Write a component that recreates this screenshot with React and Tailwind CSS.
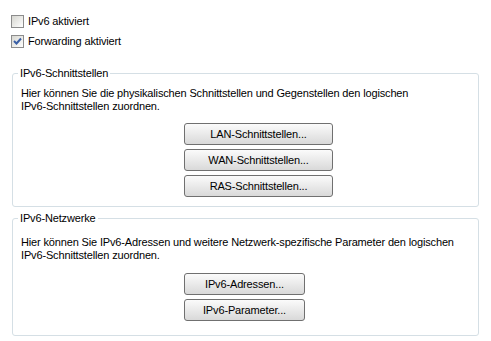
import { useState } from 'react';

function Check({ checked, label, onToggle }) {
    return (
        <label className="flex items-center h-[13px] cursor-default" onClick={onToggle}>
            <span className="w-[13px] h-[13px] border border-[#8c8c8c] bg-gradient-to-br from-[#d6d6d0] to-white flex items-center justify-center">
                {checked && (
                    <svg width="9" height="9" viewBox="0 0 9 9">
                        <path d="M1 4 L3.5 6.5 L8 1.5" fill="none" stroke="#3a5fa5" strokeWidth="2" />
                    </svg>
                )}
            </span>
            <span className="ml-[4px]">{label}</span>
        </label>
    );
}

function Btn({ children, w }) {
    return (
        <button className={`${w} h-[22px] rounded-[3px] border border-[#707070] bg-gradient-to-b from-[#fbfbfb] to-[#d9d9d9] text-black leading-[13px]`}>
            {children}
        </button>
    );
}

function Group({ title, children, className }) {
    return (
        <div className={`relative mx-[12px] border border-[#d5dfe5] rounded-[3px] ${className}`}>
            <span className="absolute -top-[7px] left-[5px] bg-white px-[2px] leading-[13px]">{title}</span>
            {children}
        </div>
    );
}

export default function App() {
    const [ipv6, setIpv6] = useState(false);
    const [fwd, setFwd] = useState(true);

    return (
        <div className="w-[491px] h-[341px] bg-white text-black text-[11px] leading-[13px] tracking-[-0.15px] font-['Liberation_Sans',Arial,sans-serif] pt-[15px] overflow-hidden">
            <div className="flex flex-col gap-[7px] pl-[11px]">
                <Check checked={ipv6} label="IPv6 aktiviert" onToggle={() => setIpv6(!ipv6)} />
                <Check checked={fwd} label="Forwarding aktiviert" onToggle={() => setFwd(!fwd)} />
            </div>

            <Group title="IPv6-Schnittstellen" className="mt-[25px] pt-[13px] pb-[9px]">
                <p className="pl-[8px]">
                    Hier können Sie die physikalischen Schnittstellen und Gegenstellen den logischen
                    <br />
                    IPv6-Schnittstellen zuordnen.
                </p>
                <div className="flex flex-col gap-[4px] pl-[171px] mt-[10px]">
                    <Btn w="w-[149px]">LAN-Schnittstellen...</Btn>
                    <Btn w="w-[149px]">WAN-Schnittstellen...</Btn>
                    <Btn w="w-[149px]">RAS-Schnittstellen...</Btn>
                </div>
            </Group>

            <Group title="IPv6-Netzwerke" className="mt-[11px] pt-[17px] pb-[14px]">
                <p className="pl-[8px]">
                    Hier können Sie IPv6-Adressen und weitere Netzwerk-spezifische Parameter den logischen
                    <br />
                    IPv6-Schnittstellen zuordnen.
                </p>
                <div className="flex flex-col gap-[4px] pl-[171px] mt-[11px]">
                    <Btn w="w-[121px]">IPv6-Adressen...</Btn>
                    <Btn w="w-[121px]">IPv6-Parameter...</Btn>
                </div>
            </Group>
        </div>
    );
}
